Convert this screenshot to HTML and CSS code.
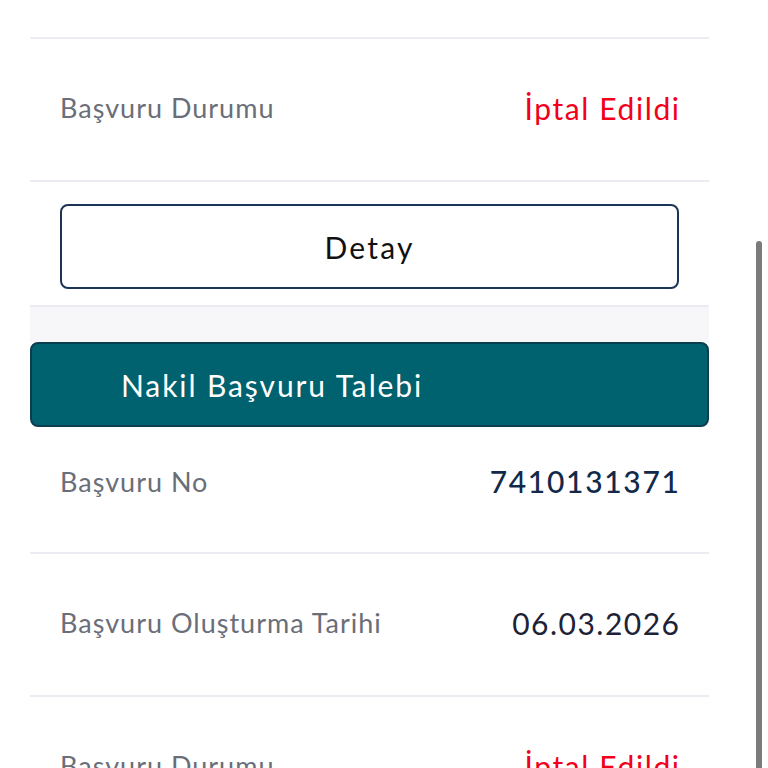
FILE: index.html
```html
<!DOCTYPE html>
<html lang="tr">
<head>
<meta charset="utf-8">
<title>Başvurular</title>
<link rel="stylesheet" href="styles.css">
</head>
<body>
<div class="page">
  <div class="list">
    <div class="spacer"></div>
    <div class="row">
      <span class="label">Başvuru Durumu</span>
      <span class="value value-red">İptal Edildi</span>
    </div>
    <div class="action">
      <button class="btn-detail">Detay</button>
    </div>
    <div class="band"></div>
    <div class="card-head">Nakil Başvuru Talebi</div>
    <div class="row row-short">
      <span class="label">Başvuru No</span>
      <span class="value value-navy">7410131371</span>
    </div>
    <div class="row">
      <span class="label">Başvuru Oluşturma Tarihi</span>
      <span class="value value-dark">06.03.2026</span>
    </div>
    <div class="row">
      <span class="label">Başvuru Durumu</span>
      <span class="value value-red">İptal Edildi</span>
    </div>
  </div>
  <div class="scroll-thumb"></div>
</div>
</body>
</html>
```
FILE: styles.css
```css
html, body {
  margin: 0;
  padding: 0;
  background: #ffffff;
  overflow: hidden;
}
body {
  font-family: Lato, "Open Sans", sans-serif;
}
.page {
  position: relative;
  height: 768px;
  overflow: hidden;
}
.list {
  width: 679px;
  margin-left: 30px;
}
.spacer {
  height: 37px;
  border-bottom: 2px solid #ebebf2;
}
.row {
  height: 137px;
  box-sizing: content-box;
  display: flex;
  align-items: center;
  justify-content: space-between;
  padding: 0 30px 4px;
  border-bottom: 2px solid #ebebf2;
}
.row-short {
  height: 108px;
  padding-bottom: 17px;
}
.label {
  font-size: 27px;
  letter-spacing: 1px;
  color: #6a6e78;
}
.value {
  font-size: 30px;
}
.value-red {
  color: #f2001a;
  letter-spacing: 1.6px;
  margin-right: -1.6px;
}
.value-navy {
  color: #12294a;
  font-weight: 500;
  letter-spacing: 1.7px;
  margin-right: -1.7px;
}
.value-dark {
  color: #1d2236;
  letter-spacing: 1.5px;
  margin-right: -1.5px;
}
.action {
  padding: 22px 30px 16px;
  border-bottom: 2px solid #ebebf2;
}
.btn-detail {
  display: block;
  width: 100%;
  height: 85px;
  background: #ffffff;
  border: 2px solid #1c3556;
  border-radius: 8px;
  font-family: Lato, "Open Sans", sans-serif;
  font-size: 30px;
  letter-spacing: 2.2px;
  color: #111111;
  cursor: pointer;
}
.band {
  height: 35px;
  background: #f7f7f9;
}
.card-head {
  height: 81px;
  display: flex;
  align-items: center;
  padding-left: 89px;
  background: #00616f;
  border: 2px solid #0b3f4e;
  border-radius: 8px;
  color: #ffffff;
  font-size: 30px;
  letter-spacing: 1.9px;
}
.scroll-thumb {
  position: absolute;
  top: 241px;
  right: 6px;
  width: 6px;
  height: 540px;
  border-radius: 3px;
  background: #7b7b7b;
}
```
